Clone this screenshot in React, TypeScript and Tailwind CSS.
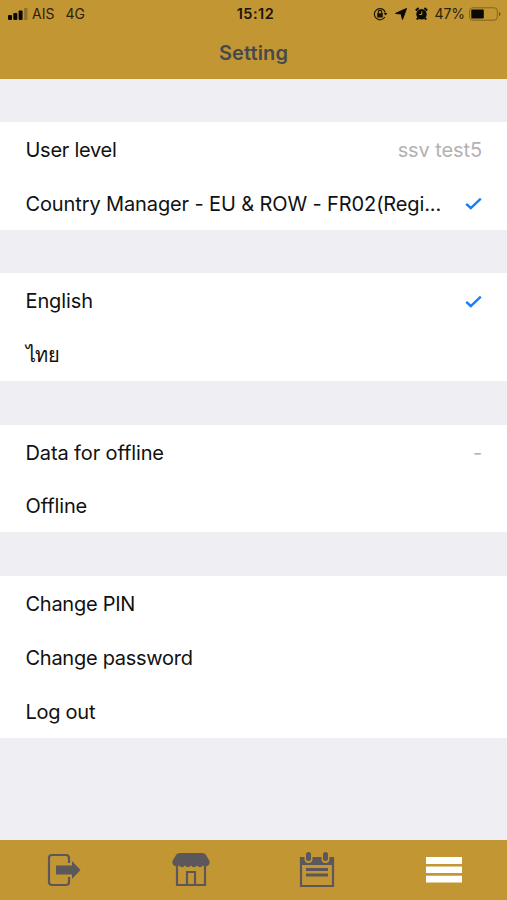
import type { ReactNode } from "react";

type Row = {
  label: string;
  value?: string;
  selected?: boolean;
  className?: string;
};

const groups: Row[][] = [
  [
    { label: "User level", value: "ssv test5" },
    {
      label: "Country Manager - EU & ROW - FR02(Regi...",
      selected: true,
      className: "tracking-[-0.12px]",
    },
  ],
  [
    { label: "English", selected: true, className: "tracking-[-0.12px]" },
    { label: "ไทย", className: "font-medium tracking-[-0.3px]" },
  ],
  [
    { label: "Data for offline", value: "-", className: "tracking-[-0.12px]" },
    { label: "Offline", className: "tracking-[-0.12px]" },
  ],
  [{ label: "Change PIN" }, { label: "Change password" }, { label: "Log out" }],
];

function StatusBar() {
  return (
    <div className="grid h-[27px] grid-cols-[1fr_auto_1fr] items-center pl-2 pr-[6px] text-[14px] text-[#2c220c]">
      <div className="flex items-center">
        <svg width="20" height="12" viewBox="0 0 20 12" fill="#0b0903">
          <rect x="0" y="7" width="4" height="5" rx="1" />
          <rect x="5.3" y="5" width="4" height="7" rx="1" />
          <rect x="10.6" y="2.5" width="4" height="9.5" rx="1" />
          <rect x="16" y="0" width="3.5" height="12" rx="1" opacity="0.25" />
        </svg>
        <span className="ml-1">AIS</span>
        <span className="ml-[11px]">4G</span>
      </div>
      <span className="pl-[2px] text-[14.5px] font-semibold tracking-[0.5px] text-[#1a1407]">15:12</span>
      <div className="flex items-center justify-end">
        <svg width="15" height="14" viewBox="0 0 15 14" fill="none" stroke="#1a1407" strokeWidth="1.2">
          <path d="M11.8 10A5.6 5.6 0 1 1 12.3 5.5" />
          <path d="M10.5 6h4l-2 2.5z" fill="#1a1407" stroke="none" />
          <rect x="4.2" y="6.2" width="5.6" height="4.3" fill="#1a1407" stroke="none" />
          <path d="M5.3 6.5V5a1.7 1.7 0 0 1 3.4 0v1.5" />
        </svg>
        <svg className="ml-[7px]" width="12" height="12" viewBox="0 0 12 12" fill="#0b0903">
          <path d="M11.5 .5 7.5 11.5 6.2 6 .5 5.400z" stroke="#0b0903" strokeWidth="1" />
        </svg>
        <svg className="ml-[8px]" width="13" height="13" viewBox="0 0 13 13">
          <circle cx="6.5" cy="7.2" r="5.2" fill="#0b0903" />
          <path d="M.8 3.5 3.6 1M12.2 3.5 9.4 1M3.2 11 1.8 12.5M9.8 11l1.4 1.5" stroke="#0b0903" strokeWidth="2" />
          <path d="M6.8 4.3v3.2H4.3" fill="none" stroke="#c29633" strokeWidth="1" />
        </svg>
        <span className="ml-[7px] tracking-[-0.1px]">47%</span>
        <svg className="ml-1" width="32" height="14" viewBox="0 0 32 14">
          <rect x=".7" y=".8" width="27.6" height="12.4" rx="3" fill="none" stroke="#806322" />
          <rect x="2.3" y="2.5" width="12.5" height="9" rx="1" fill="#0b0903" />
          <path d="M30 5v4q1.6-.5 1.6-2T30 5" fill="#6c531b" />
        </svg>
      </div>
    </div>
  );
}

function CheckMark() {
  return (
    <svg width="17" height="13" viewBox="0 0 17 13" fill="none" stroke="#157efb" strokeWidth="2.4">
      <path d="m1.2 6.8 4.600 4.200L15.800 1.600" />
    </svg>
  );
}

function SettingRow({ row }: { row: Row }) {
  return (
    <li className="flex h-[53.8px] items-center justify-between pt-[2px] pl-[25.5px] pr-[25px] text-[20px]">
      <span className={`whitespace-nowrap text-[#111111] ${row.className ?? "tracking-[-0.27px]"}`}>
        {row.label}
      </span>
      {row.value && <span className="tracking-[-0.1px] text-[#b2b2b2]">{row.value}</span>}
      {row.selected && <CheckMark />}
    </li>
  );
}

function TabButton({ label, children }: { label: string; children: ReactNode }) {
  return (
    <button aria-label={label} className="flex flex-1 items-center justify-center">
      {children}
    </button>
  );
}

function TabBar() {
  return (
    <nav className="flex h-[60px] bg-[#c29633]">
      <TabButton label="Exit">
        <svg className="ml-[2px]" width="34" height="34" viewBox="0 0 34 34" fill="none" stroke="#5b575b" strokeWidth="2.2">
          <path d="M22 10V5q0-3-3-3H5Q2 2 2 5v24q0 3 3 3h14q3 0 3-3v-5" />
          <path d="M9 12.500h16V8l8.5 9-8.5 9v-4.500H9z" fill="#5b575b" stroke="none" />
        </svg>
      </TabButton>
      <TabButton label="Store">
        <svg className="ml-[2px]" width="38" height="34" viewBox="0 0 38 34" fill="none" stroke="#5b575b" strokeWidth="2.2">
          <path
            d="M8 0h22q3 0 4 2l3.500 6c1 4-3 6.500-6.500 4.500q-3 3.500-6 0-3 3.500-6 0-3 3.500-6 0-3 3.500-6 0C3.500 14.500-.500 12 .500 8L4 2q1-2 4-2"
            fill="#5b575b"
            stroke="none"
          />
          <path d="M5 12v20h28V12M15 32V19h8v13" />
        </svg>
      </TabButton>
      <TabButton label="Calendar">
        <svg width="36" height="36" viewBox="0 0 36 36" fill="none" stroke="#5b575b" strokeWidth="2.2">
          <path d="M2 6h32v28H2z" />
          <path d="M1 5h34v8H1z" fill="#5b575b" stroke="none" />
          <rect x="5.500" y="0" width="8" height="11" rx="4" fill="#c29633" stroke="none" />
          <rect x="22.500" y="0" width="8" height="11" rx="4" fill="#c29633" stroke="none" />
          <rect x="7" y="0" width="5" height="9" rx="2.5" fill="#5b575b" stroke="none" />
          <rect x="24" y="0" width="5" height="9" rx="2.5" fill="#5b575b" stroke="none" />
          <path d="M7 17.500h22M7 23h22" strokeWidth="3" />
        </svg>
      </TabButton>
      <TabButton label="Menu">
        <svg width="36" height="26" viewBox="0 0 36 26" fill="#ffffff">
          <path d="M0 0h36v7H0zM0 9.500h36v6.500H0zM0 18.700h36v6.800H0z" />
        </svg>
      </TabButton>
    </nav>
  );
}

export default function App() {
  return (
    <div className="flex h-[900px] w-[507px] flex-col overflow-hidden bg-[#efeef3] font-[Inter,'Noto_Sans',sans-serif]">
      <header className="h-[79px] bg-[#c29633]">
        <StatusBar />
        <h1 className="mt-[11px] text-center text-[20px] leading-[30px] font-semibold tracking-[0.1px] text-[#474a4d]">
          Setting
        </h1>
      </header>
      <main className="flex flex-1 flex-col gap-[43.8px] pt-[43px]">
        {groups.map((rows, i) => (
          <ul key={i} className="bg-white">
            {rows.map((row) => (
              <SettingRow key={row.label} row={row} />
            ))}
          </ul>
        ))}
      </main>
      <TabBar />
    </div>
  );
}
